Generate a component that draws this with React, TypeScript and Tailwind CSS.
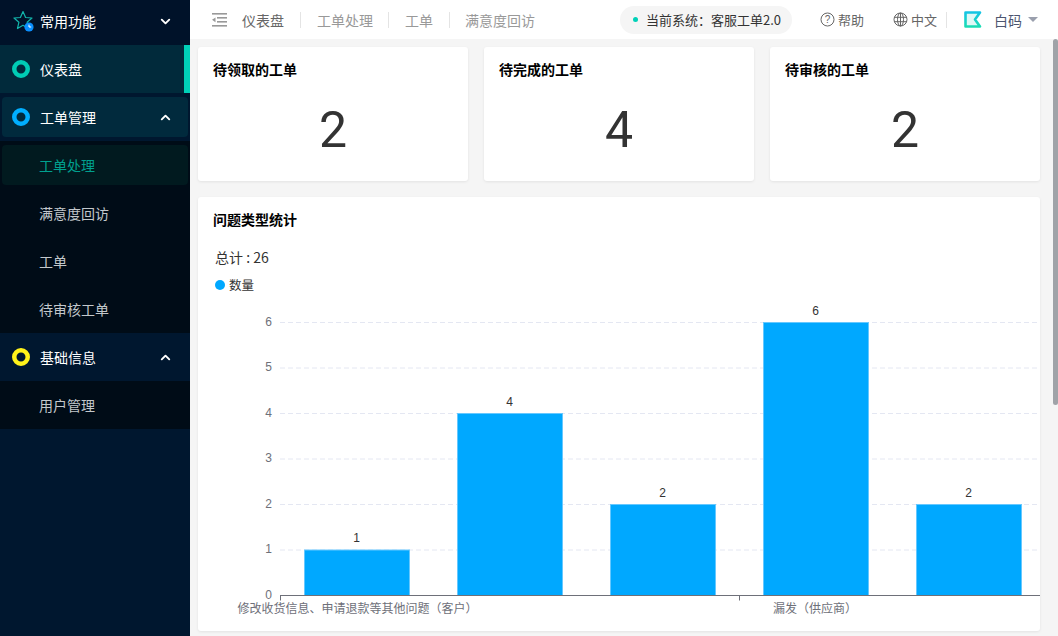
import React from "react";
import { ChevronDown, ChevronUp } from "lucide-react";

const FONT = "font-['Noto_Sans_CJK_SC','Noto_Sans',sans-serif]";

function Ring({ color }: { color: string }) {
  return (
    <svg width="18" height="18" viewBox="0 0 18 18" fill="none" className="shrink-0">
      <circle cx="9" cy="9" r="6.75" stroke={color} strokeWidth="4.5" />
    </svg>
  );
}

function SubItem({ label }: { label: string }) {
  return <div className="h-12 flex items-center pl-[39px] text-sm text-[#c3c8cc]">{label}</div>;
}

function StatCard({ title, value }: { title: string; value: string }) {
  return (
    <div className="flex-1 h-[134px] bg-white rounded-[3px] shadow-[0_1px_3px_rgba(0,0,0,0.08)] px-[15px] pt-[12px]">
      <div className="text-sm font-bold text-black leading-5">{title}</div>
      <div className="text-center text-[50px] leading-[56px] text-[#333] mt-[23px] font-['Roboto',sans-serif]">{value}</div>
    </div>
  );
}

const bars = [
  { x: 304, v: 1 },
  { x: 457, v: 4 },
  { x: 610, v: 2 },
  { x: 763, v: 6 },
  { x: 916, v: 2 },
];

function Chart() {
  const ox = 198;
  const oy = 300;
  const y0 = 595.5 - oy;
  const step = 45.5;
  return (
    <svg width={842} height={331} className="block">
      {[1, 2, 3, 4, 5, 6].map((n) => (
        <line key={n} x1={280 - ox} x2={842} y1={y0 - n * step} y2={y0 - n * step} stroke="#e4e7f2" strokeDasharray="5 3" />
      ))}
      {[0, 1, 2, 3, 4, 5, 6].map((n) => (
        <text key={n} x={272 - ox} y={y0 - n * step + 3} textAnchor="end" fontSize={12} fill="#6e7079" fontFamily="'Liberation Sans',sans-serif">
          {n}
        </text>
      ))}
      {bars.map((b) => (
        <g key={b.x}>
          <rect x={b.x - ox + 0.5} y={y0 - b.v * step} width={105} height={b.v * step} fill="#00a8ff" stroke="#66c8ff" />
          <text x={b.x - ox + 52.5} y={y0 - b.v * step - 8} textAnchor="middle" fontSize={12} fill="#333" fontFamily="'Liberation Sans',sans-serif">
            {b.v}
          </text>
        </g>
      ))}
      <line x1={280 - ox} x2={842} y1={y0} y2={y0} stroke="#6e7079" />
      <line x1={280.5 - ox} x2={280.5 - ox} y1={y0} y2={y0 + 5} stroke="#6e7079" />
      <line x1={739.5 - ox} x2={739.5 - ox} y1={y0} y2={y0 + 5} stroke="#6e7079" />
      <text x={357.5 - ox} y={y0 + 17} textAnchor="middle" fontSize={12} fill="#6e7079">
        修改收货信息、申请退款等其他问题（客户）
      </text>
      <text x={815 - ox} y={y0 + 17} textAnchor="middle" fontSize={12} fill="#6e7079">
        漏发（供应商）
      </text>
    </svg>
  );
}

export default function App() {
  return (
    <div className={`${FONT} w-[1058px] h-[636px] flex overflow-hidden bg-[#f5f5f5]`}>
      <aside className="w-[190px] shrink-0 bg-[#00172f] flex flex-col text-white">
        <div className="h-[45px] flex items-center pl-3 pr-[17px] pb-[3px] bg-[#001229]">
          <svg width="22" height="22" viewBox="0 0 22 22" className="shrink-0 mr-[6px]" fill="none">
            <path d="M11 1.5l2.6 6 6.4.5-4.9 4.2 1.4 6.3L11 15.3 5.5 18.5l1.4-6.3L2 8l6.4-.5z" stroke="#12b5ab" strokeWidth="1.2" strokeLinejoin="round" />
            <circle cx="17" cy="17" r="4.6" fill="#0a8fff" />
            <path d="M17 14.6V17h2.2" stroke="#fff" strokeWidth="1" />
          </svg>
          <span className="flex-1 text-sm">常用功能</span>
          <ChevronDown size={15} strokeWidth={3} />
        </div>
        <div className="h-12 flex items-center gap-[10px] pl-3 bg-[#012a3b] border-r-[6px] border-[#00d1b8] text-sm">
          <Ring color="#00ccb4" />
          <span>仪表盘</span>
        </div>
        <div className="h-[4px]" />
        <div className="mx-[2px] h-10 rounded-sm bg-[#012a3d] flex items-center pl-[10px] pr-[15px] gap-[10px] text-sm">
          <Ring color="#00aeff" />
          <span className="flex-1">工单管理</span>
          <ChevronUp size={15} strokeWidth={3} />
        </div>
        <div className="bg-[#000c17] pt-[4px] mt-1">
          <div className="mx-[2px] h-10 rounded-sm bg-[#011a1f] flex items-center pl-[37px] text-sm text-[#00a08f]">工单处理</div>
          <div className="h-1" />
          <SubItem label="满意度回访" />
          <SubItem label="工单" />
          <SubItem label="待审核工单" />
        </div>
        <div className="h-12 flex items-center gap-[10px] pl-3 pr-[17px] bg-[#00172f] text-sm">
          <Ring color="#fff21a" />
          <span className="flex-1">基础信息</span>
          <ChevronUp size={15} strokeWidth={3} />
        </div>
        <div className="bg-[#000c17]">
          <SubItem label="用户管理" />
        </div>
      </aside>

      <div className="flex-1 flex flex-col min-w-0">
        <header className="h-[39px] shrink-0 bg-white flex items-center pl-[22px] pr-[20px] text-[13px]">
          <svg width="15" height="14" viewBox="0 0 15 14" className="shrink-0 mr-[15px]" fill="#999">
            <rect x="0" y="0" width="15" height="1.6" />
            <rect x="5" y="4" width="10" height="1.6" />
            <rect x="5" y="8" width="10" height="1.6" />
            <rect x="0" y="12" width="15" height="1.6" />
            <path d="M0 6.8L3.5 4.4v4.8z" />
          </svg>
          <span className="text-sm text-[#666]">仪表盘</span>
          <span className="w-px h-4 bg-[#e4e4e4] mx-4" />
          <span className="text-sm text-[#999]">工单处理</span>
          <span className="w-px h-4 bg-[#e4e4e4] ml-[15px] mr-4" />
          <span className="text-sm text-[#999]">工单</span>
          <span className="w-px h-4 bg-[#e4e4e4] ml-4 mr-[15px]" />
          <span className="text-sm text-[#999]">满意度回访</span>
          <div className="flex-1" />
          <div className="h-7 rounded-full bg-[#f5f5f5] flex items-center pl-[13px] pr-[11px] text-[#333] mr-[28px]">
            <span className="w-[5px] h-[5px] rounded-full bg-[#00d1b8] mr-2" />
            当前系统：客服工单2.0
          </div>
          <svg width="15" height="15" viewBox="0 0 15 15" fill="none" className="mr-[3px]">
            <circle cx="7.5" cy="7.5" r="6.5" stroke="#666" />
            <text x="7.5" y="11" textAnchor="middle" fontSize="10" fill="#666" fontFamily="'Liberation Sans',sans-serif">?</text>
          </svg>
          <span className="text-[#666] mr-[29px]">帮助</span>
          <svg width="15" height="15" viewBox="0 0 15 15" fill="none" stroke="#666" strokeWidth="1" className="mr-[3px]">
            <circle cx="7.5" cy="7.5" r="6.5" />
            <ellipse cx="7.5" cy="7.5" rx="3" ry="6.5" />
            <path d="M7.5 1v13M1.3 5.3h12.4M1.3 9.7h12.4" />
          </svg>
          <span className="text-[#666]">中文</span>
          <span className="w-px h-4 bg-[#e4e4e4] ml-[9px] mr-[17px]" />
          <svg width="18" height="17" viewBox="0 0 18 17" fill="none" className="mr-[12px]">
            <defs>
              <linearGradient id="lg" x1="0" y1="0" x2="0" y2="1">
                <stop offset="0" stopColor="#14c4e4" />
                <stop offset="1" stopColor="#1adcb4" />
              </linearGradient>
            </defs>
            <path d="M1.5 1.5h14.5L11 8.5l5 7H1.5z" fill="#dff8f6" stroke="url(#lg)" strokeWidth="2.6" strokeLinejoin="round" />
          </svg>
          <span className="text-sm text-[#4d5670] mr-[6px]">白码</span>
          <span className="w-0 h-0 border-x-[5px] border-x-transparent border-t-[5px] border-t-[#9a9fad]" />
        </header>
        <div className="flex-1 flex min-h-0">
          <main className="flex-1 pl-2 pr-[13px] pt-2 flex flex-col gap-4 overflow-hidden">
            <div className="flex gap-4">
              <StatCard title="待领取的工单" value="2" />
              <StatCard title="待完成的工单" value="4" />
              <StatCard title="待审核的工单" value="2" />
            </div>
            <section className="bg-white rounded-[3px] shadow-[0_1px_3px_rgba(0,0,0,0.08)] shrink-0 overflow-hidden">
              <div className="px-[15px] pt-[12px] text-sm font-bold text-black leading-5">问题类型统计</div>
              <div className="px-[17px] mt-[18px] text-sm text-[#333] leading-5">总计 : 26</div>
              <div className="pl-[17px] mt-[8px] flex items-center gap-[4px] text-[12.5px] text-[#333] leading-5">
                <span className="w-[10px] h-[10px] rounded-full bg-[#00a8ff]" />
                数量
              </div>
              <div className="mt-[5px]"><Chart /></div>
            </section>
          </main>
          <div className="w-[5px] shrink-0 relative">
            <div className="h-[366px] bg-[#a0a3a8] rounded-sm" />
          </div>
        </div>
      </div>
    </div>
  );
}
